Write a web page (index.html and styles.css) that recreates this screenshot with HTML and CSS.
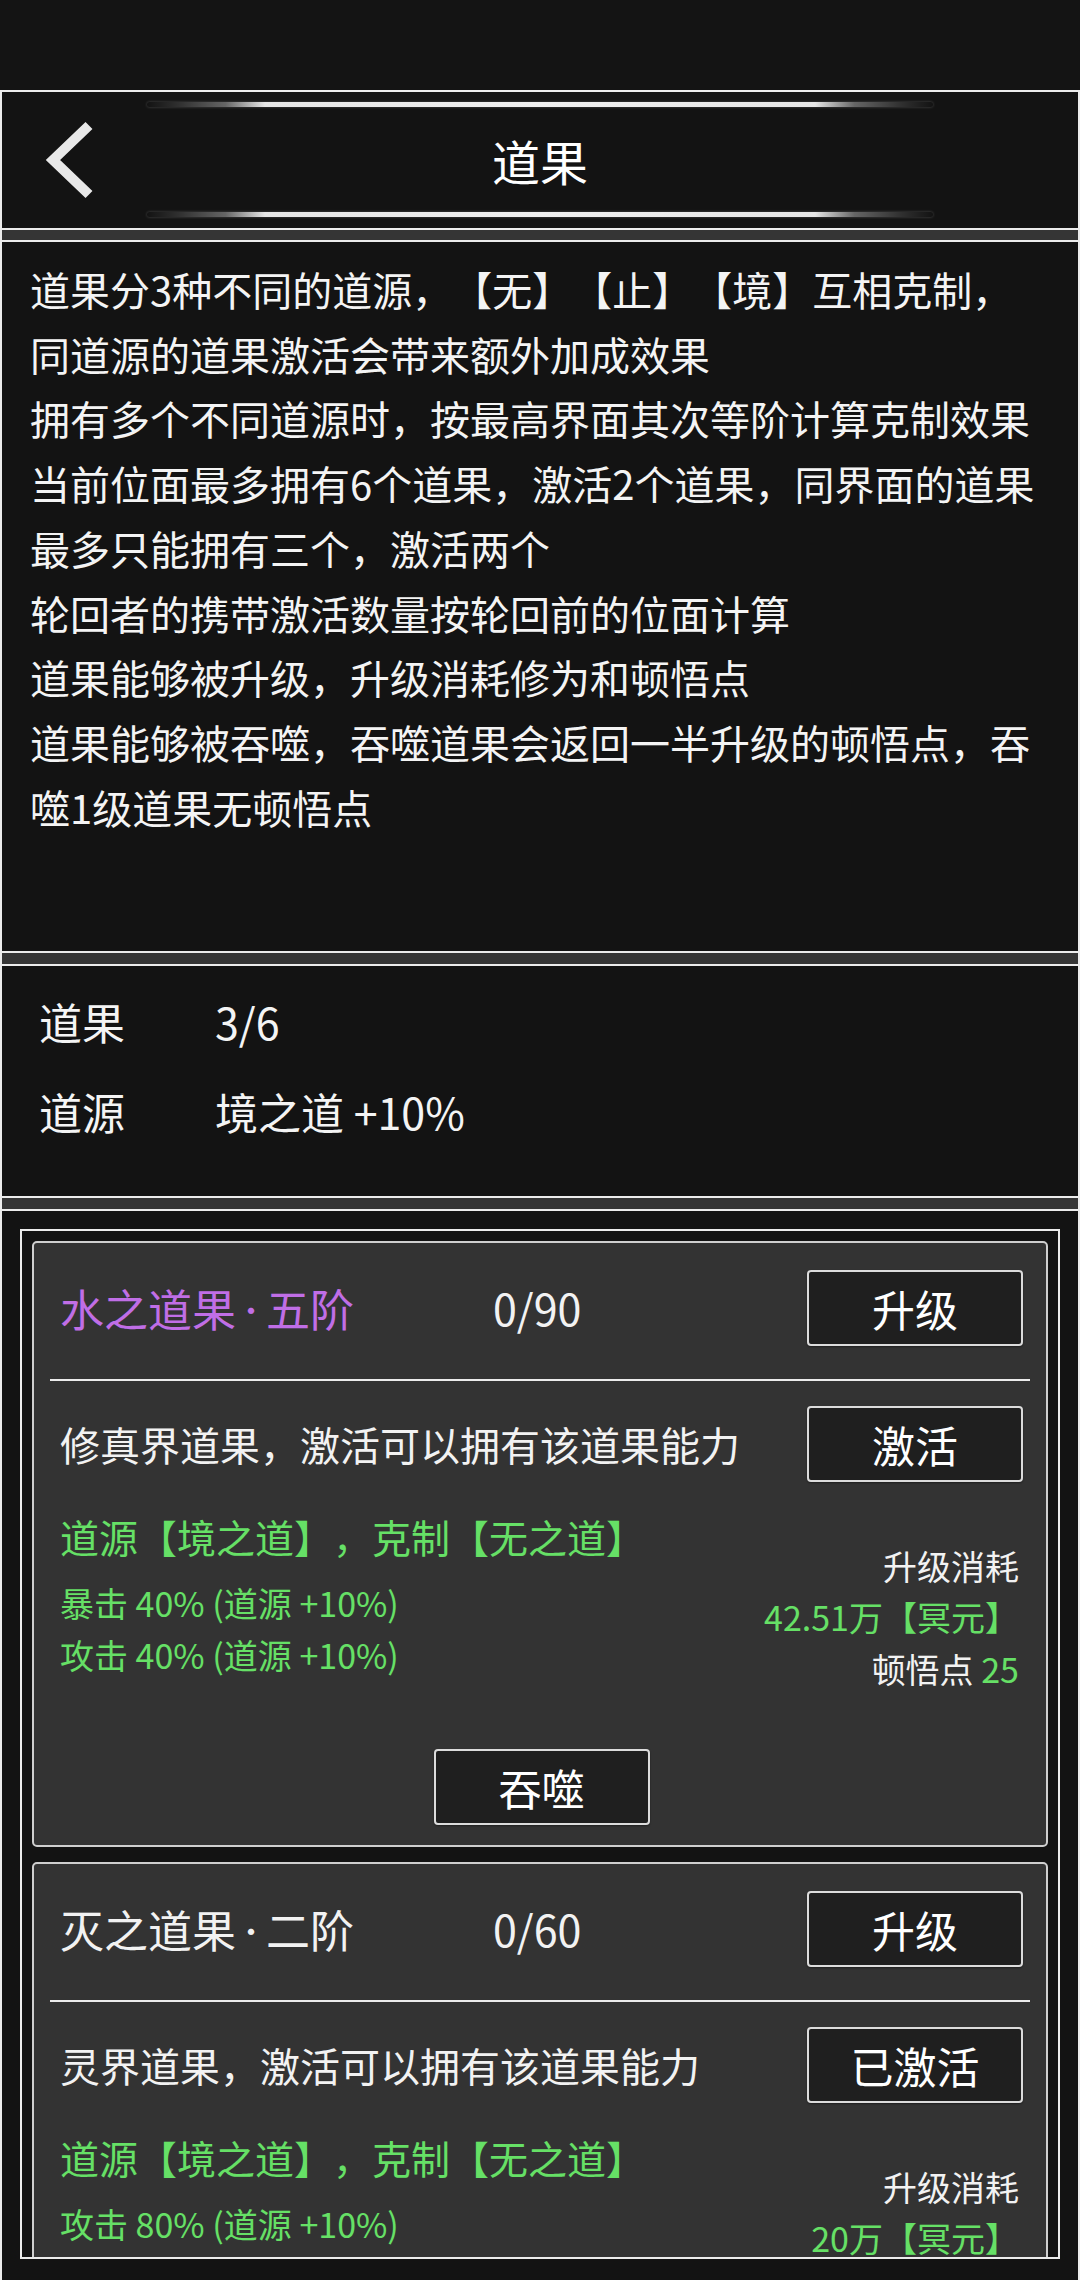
FILE: index.html
```html
<!DOCTYPE html>
<html lang="zh-CN">
<head>
<meta charset="utf-8">
<title>道果</title>
<link rel="stylesheet" href="styles.css">
</head>
<body>
<div class="statusbar"></div>
<main class="frame">
  <header class="panel header">
    <div class="glow"></div>
    <div class="titlebar">
      <div class="back">
        <svg width="56" height="80" viewBox="0 0 56 80"><polyline points="49,5.5 13,40 49,74.5" fill="none" stroke="#e8e8e8" stroke-width="10" stroke-linecap="butt" stroke-linejoin="miter"/></svg>
      </div>
      <h1 class="title">道果</h1>
      <div></div>
    </div>
    <div class="glow"></div>
  </header>

  <section class="panel desc">
    <div class="line">道果分3种不同的道源，【无】【止】【境】互相克制，</div>
    <div class="line">同道源的道果激活会带来额外加成效果</div>
    <div class="line">拥有多个不同道源时，按最高界面其次等阶计算克制效果</div>
    <div class="line">当前位面最多拥有6个道果，激活2个道果，同界面的道果</div>
    <div class="line">最多只能拥有三个，激活两个</div>
    <div class="line">轮回者的携带激活数量按轮回前的位面计算</div>
    <div class="line">道果能够被升级，升级消耗修为和顿悟点</div>
    <div class="line">道果能够被吞噬，吞噬道果会返回一半升级的顿悟点，吞</div>
    <div class="line">噬1级道果无顿悟点</div>
  </section>

  <section class="panel stats">
    <div class="stat-row"><span class="stat-label">道果</span><span>3/6</span></div>
    <div class="stat-row"><span class="stat-label">道源</span><span>境之道 +10%</span></div>
  </section>

  <section class="panel list">
    <div class="list-box">
      <div class="card">
        <div class="card-head">
          <span class="card-title purple">水之道果<span class="dot">·</span>五阶</span>
          <span class="card-count">0/90</span>
          <div class="btn">升级</div>
        </div>
        <div class="divider"></div>
        <div class="card-desc">
          <span>修真界道果，激活可以拥有该道果能力</span>
          <div class="btn">激活</div>
        </div>
        <div class="detail">
          <div class="detail-left">
            <div class="green-head">道源【境之道】，克制【无之道】</div>
            <div class="attr">暴击 40% (道源 +10%)</div>
            <div class="attr">攻击 40% (道源 +10%)</div>
          </div>
          <div class="detail-right">
            <div>升级消耗</div>
            <div class="green">42.51万【冥元】</div>
            <div>顿悟点 <span class="green">25</span></div>
          </div>
        </div>
        <div class="btn devour">吞噬</div>
      </div>

      <div class="card">
        <div class="card-head">
          <span class="card-title">灭之道果<span class="dot">·</span>二阶</span>
          <span class="card-count">0/60</span>
          <div class="btn">升级</div>
        </div>
        <div class="divider"></div>
        <div class="card-desc">
          <span>灵界道果，激活可以拥有该道果能力</span>
          <div class="btn">已激活</div>
        </div>
        <div class="detail">
          <div class="detail-left">
            <div class="green-head">道源【境之道】，克制【无之道】</div>
            <div class="attr">攻击 80% (道源 +10%)</div>
          </div>
          <div class="detail-right">
            <div>升级消耗</div>
            <div class="green">20万【冥元】</div>
          </div>
        </div>
      </div>
    </div>
  </section>
</main>
</body>
</html>
```

FILE: styles.css
```css
html, body {
  margin: 0;
  padding: 0;
}
body {
  width: 1080px;
  height: 2280px;
  overflow: hidden;
  background: #141414;
  color: #f2f2f2;
  font-family: "Noto Sans CJK SC", "Noto Sans", sans-serif;
  font-weight: 400;
  text-spacing-trim: space-all;
  font-kerning: none;
}
.statusbar {
  height: 90px;
  background: #141414;
}
.frame {
  height: 2190px;
  box-sizing: border-box;
  border-left: 2px solid #ececec;
  border-right: 2px solid #ececec;
  background: #353535;
  display: flex;
  flex-direction: column;
  gap: 10px;
}
.panel {
  background: #131313;
  border-top: 2px solid #ececec;
  border-bottom: 2px solid #ececec;
  flex: none;
}

/* header */
.header {
  height: 140px;
  box-sizing: border-box;
  padding: 10px 0 11px;
  display: flex;
  flex-direction: column;
}
.glow {
  height: 5px;
  margin: 0 145px;
  border-radius: 3px;
  background: linear-gradient(90deg,
    rgba(255,255,255,0) 0%,
    rgba(255,255,255,0.12) 4%,
    rgba(255,255,255,0.35) 10%,
    rgba(242,242,242,0.95) 15%,
    #f0f0f0 50%,
    rgba(242,242,242,0.95) 85%,
    rgba(255,255,255,0.35) 90%,
    rgba(255,255,255,0.12) 96%,
    rgba(255,255,255,0) 100%);
  box-shadow: 0 0 3px rgba(255,255,255,0.25);
}
.titlebar {
  flex: 1;
  display: grid;
  grid-template-columns: 1fr auto 1fr;
  align-items: center;
}
.back {
  padding-left: 38px;
  display: flex;
  align-items: center;
}
.title {
  margin: 0;
  font-size: 48px;
  font-weight: 400;
  line-height: 1;
  color: #fff;
}

/* description */
.desc {
  height: 713px;
  box-sizing: border-box;
  padding: 15px 20px 0 28px;
  font-size: 40px;
  line-height: 64.7px;
  color: #f4f4f4;
}
.line {
  white-space: nowrap;
}

/* stats */
.stats {
  height: 234px;
  box-sizing: border-box;
  margin-top: 1px;
  padding: 10px 0 0 37px;
  font-size: 43px;
  line-height: 90px;
  color: #f4f4f4;
}
.stat-row {
  display: flex;
}
.stat-label {
  width: 176px;
}

/* list */
.list {
  flex: 1;
  min-height: 0;
  margin-top: 1px;
  border-bottom: none;
  padding: 18px 18px 0;
}
.list-box {
  height: 1030px;
  box-sizing: border-box;
  border: 2px solid #ececec;
  padding: 10px;
  overflow: hidden;
  display: flex;
  flex-direction: column;
  gap: 15px;
}
.card {
  flex: none;
  background: #333333;
  border: 2px solid #cfcfcf;
  border-radius: 5px;
  padding: 27px 23px 20px 26px;
}
.card-head {
  display: flex;
  align-items: center;
}
.card-title {
  width: 433px;
  font-size: 44px;
  line-height: 1.2;
  white-space: nowrap;
}
.dot {
  font-size: 30px;
  vertical-align: 5px;
}
.purple {
  color: #c06ee6;
}
.card-count {
  flex: 1;
  font-size: 43px;
  line-height: 1.2;
}
.btn {
  flex: none;
  width: 216px;
  height: 76px;
  box-sizing: border-box;
  border: 2px solid #dcdcdc;
  border-radius: 4px;
  background: #1f1f1f;
  color: #fff;
  font-size: 43px;
  display: flex;
  align-items: center;
  justify-content: center;
  box-shadow: 0 1px 2px rgba(0,0,0,0.4);
}
.divider {
  height: 2px;
  background: #ececec;
  margin: 33px -7px 25px -10px;
}
.card-desc {
  display: flex;
  align-items: center;
  justify-content: space-between;
  font-size: 40px;
  white-space: nowrap;
}
.detail {
  display: flex;
  justify-content: space-between;
  margin-top: 28px;
}
.green-head {
  font-size: 39px;
  line-height: 52px;
  color: #66e066;
  margin-bottom: 15px;
  white-space: nowrap;
}
.attr {
  font-size: 34px;
  line-height: 52px;
  color: #66e066;
  white-space: nowrap;
}
.detail-right {
  padding-top: 29.5px;
  padding-right: 4px;
  text-align: right;
  font-size: 34px;
  line-height: 51.5px;
  color: #f2f2f2;
  white-space: nowrap;
}
.green {
  color: #66e066;
}
.devour {
  margin: 55px auto 0;
}
```
